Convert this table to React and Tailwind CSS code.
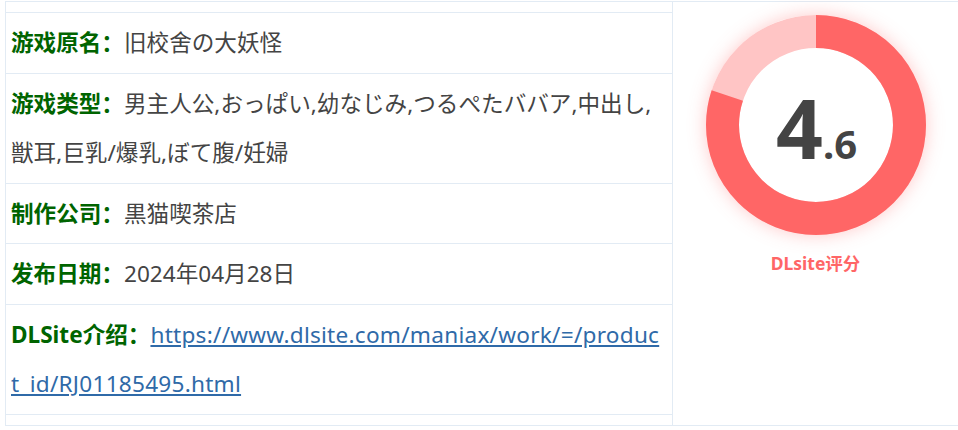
export default function App() {
  const font = { fontFamily: '"Noto Sans", "Noto Sans CJK SC", sans-serif' };
  const rows = [
    { label: "游戏原名：", value: "旧校舍の大妖怪" },
    { label: "游戏类型：", value: "男主人公,おっぱい,幼なじみ,つるぺたババア,中出し,獣耳,巨乳/爆乳,ぼて腹/妊婦" },
    { label: "制作公司：", value: "黒猫喫茶店" },
    { label: "发布日期：", value: "2024年04月28日" },
  ];
  const r = 93.5;
  const c = 2 * Math.PI * r;
  return (
    <div className="w-[958px] h-[430px] bg-white" style={font}>
      <div className="ml-[5px] mt-px h-[425px] flex border-l border-t border-b border-[#e2ebf4]">
        <div className="w-[667px] border-r border-[#e2ebf4] py-[10px]">
          <div className="border-b border-[#e2ebf4]">
            {rows.map((row, i) => (
              <div key={i} className="border-t border-[#e2ebf4] pl-[5px] pr-[8px] py-[5px] text-[22.6px] leading-[49.5px] text-[#444]">
                <span className="font-bold text-[#006400]">{row.label}</span>
                <span>{row.value}</span>
              </div>
            ))}
            <div className="border-t border-[#e2ebf4] pl-[5px] pr-[8px] py-[5px] text-[22.6px] leading-[49.5px] text-[#444] break-all">
              <span className="font-bold text-[#006400]">DLSite介绍：</span>
              <a className="text-[#2f6aa8] underline tracking-[0.25px]" href="#">https://www.dlsite.com/maniax/work/=/product_id/RJ01185495.html</a>
            </div>
          </div>
        </div>
        <div className="flex-1 flex flex-col items-center pt-[13px]">
          <div className="relative w-[220px] h-[220px] rounded-full shadow-[0_0_18px_rgba(255,102,102,0.35)]">
            <svg width="220" height="220" viewBox="0 0 220 220" className="absolute inset-0">
              <circle cx="110" cy="110" r={r} fill="none" stroke="#ffc5c5" strokeWidth="33" />
              <circle
                cx="110"
                cy="110"
                r={r}
                fill="none"
                stroke="#ff6666"
                strokeWidth="33"
                strokeDasharray={`${c * 0.8} ${c}`}
                transform="rotate(-90 110 110)"
              />
            </svg>
            <div className="absolute inset-0 flex items-center justify-center">
              <div className="flex items-baseline text-[#444] font-bold pl-[2px] pt-[4px]">
                <span className="text-[82px] leading-none">4</span>
                <span className="text-[40px] leading-none">.6</span>
              </div>
            </div>
          </div>
          <div className="mt-[17px] text-[17.5px] font-bold text-[#ff6666] leading-[22px]">DLsite评分</div>
        </div>
      </div>
    </div>
  );
}
